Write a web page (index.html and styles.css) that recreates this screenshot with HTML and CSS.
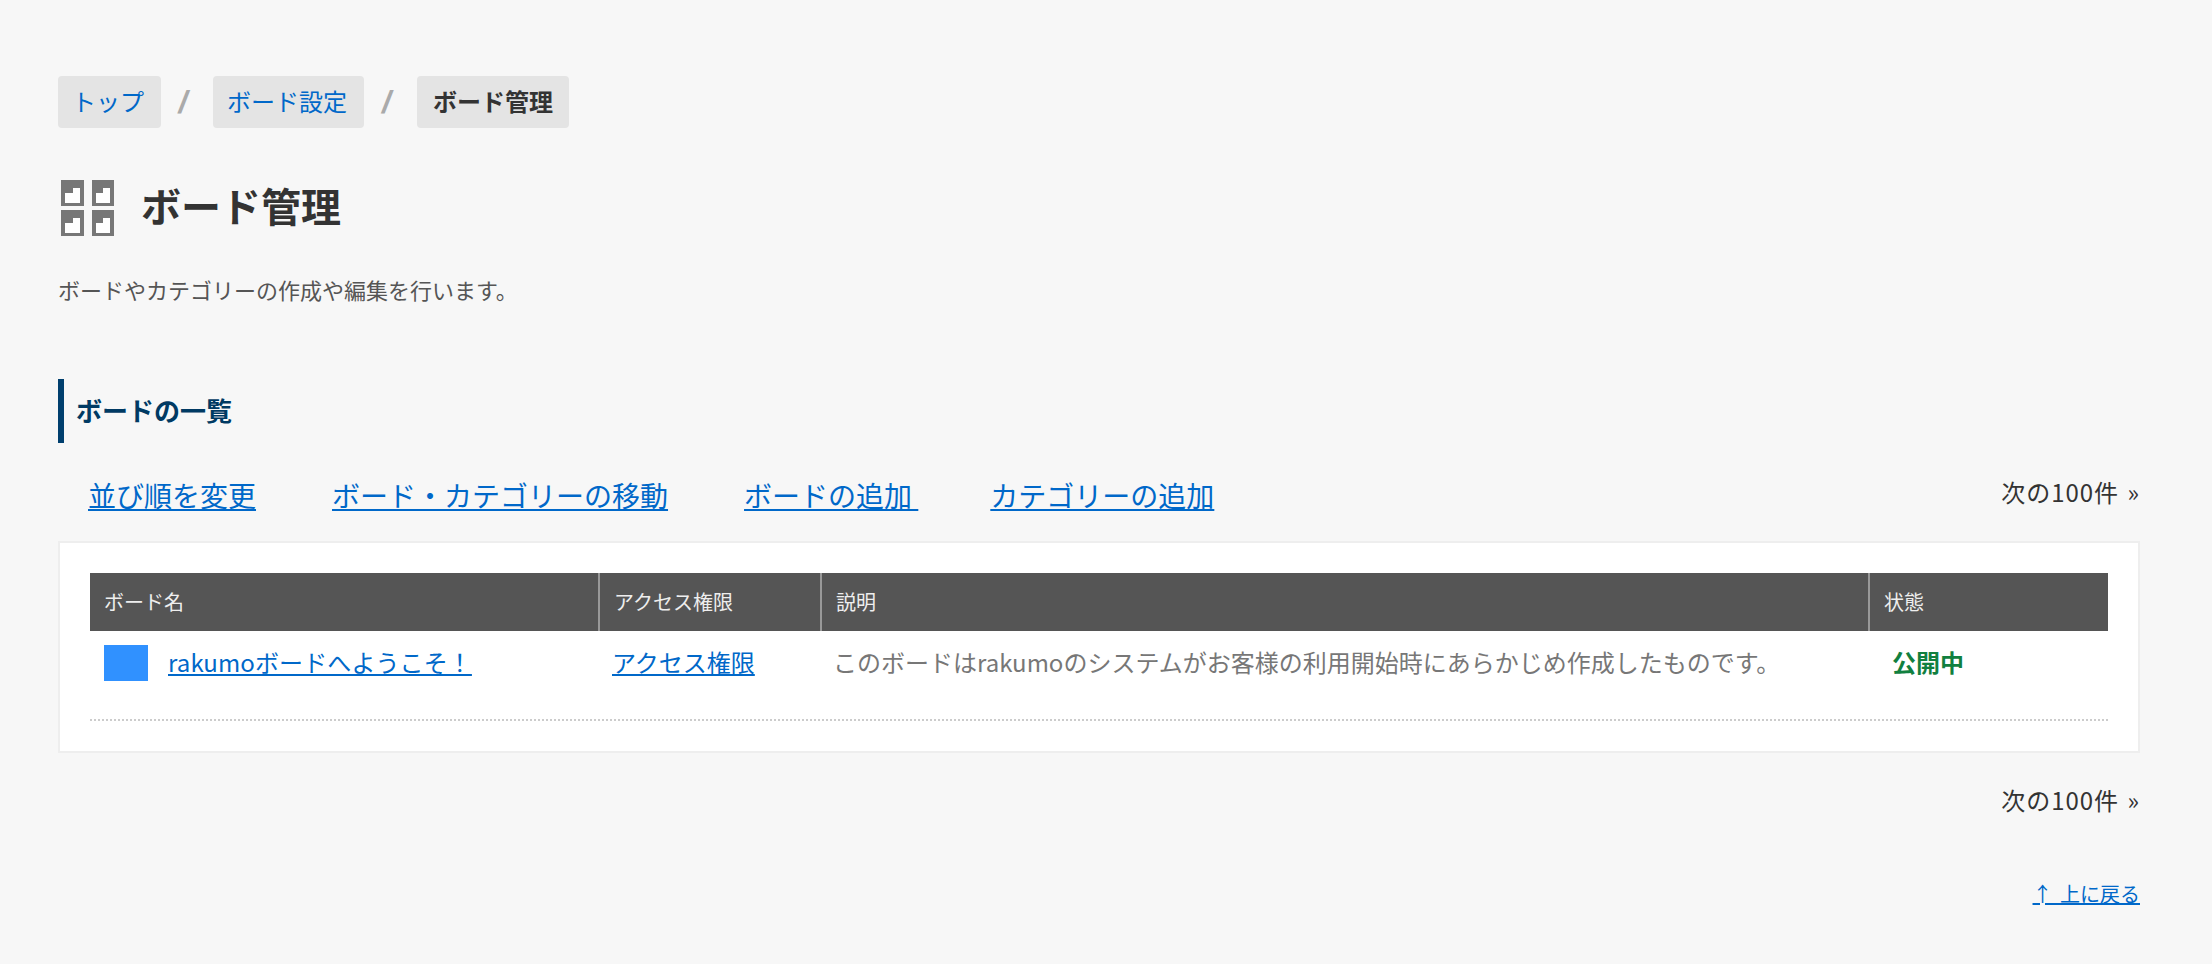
FILE: index.html
```html
<!DOCTYPE html>
<html lang="ja">
<head>
<meta charset="utf-8">
<title>ボード管理</title>
<link rel="stylesheet" href="styles.css">
</head>
<body>
<nav class="crumbs">
  <a class="crumb" href="#">トップ</a>
  <span class="sep">/</span>
  <a class="crumb" href="#">ボード設定</a>
  <span class="sep sep-wide">/</span>
  <span class="crumb current">ボード管理</span>
</nav>
<header class="title">
  <svg class="title-icon" width="53" height="56" viewBox="0 0 53 56" aria-hidden="true">
    <path fill="#777" d="M0 0h23v26H0z"/>
    <path fill="#fff" d="M4 13h8V8h7v15H4z"/>
    <path fill="#777" d="M31 0h22v26H31z"/>
    <path fill="#fff" d="M35 13h7V8h7v15H35z"/>
    <path fill="#777" d="M0 30h23v26H0z"/>
    <path fill="#fff" d="M4 43h8v-5h7v15H4z"/>
    <path fill="#777" d="M31 30h22v26H31z"/>
    <path fill="#fff" d="M35 43h7v-5h7v15H35z"/>
  </svg>
  <h1>ボード管理</h1>
</header>
<p class="lead">ボードやカテゴリーの作成や編集を行います。</p>
<h2 class="section">ボードの一覧</h2>
<div class="toolbar">
  <div class="actions">
    <a href="#">並び順を変更</a>
    <a href="#">ボード・カテゴリーの移動</a>
    <a class="tight" href="#">ボードの追加&nbsp;</a>
    <a href="#">カテゴリーの追加</a>
  </div>
  <span class="pager">次の100件 <b>»</b></span>
</div>
<section class="card">
  <div class="table">
    <div class="row head">
      <div class="cell">ボード名</div>
      <div class="cell">アクセス権限</div>
      <div class="cell">説明</div>
      <div class="cell">状態</div>
    </div>
    <div class="row body">
      <div class="cell name"><span class="swatch"></span><a href="#">rakumoボードへようこそ！</a></div>
      <div class="cell access"><a href="#">アクセス権限</a></div>
      <div class="cell desc">このボードはrakumoのシステムがお客様の利用開始時にあらかじめ作成したものです。</div>
      <div class="cell status">公開中</div>
    </div>
  </div>
</section>
<div class="pager-bottom"><span class="pager">次の100件 <b>»</b></span></div>
<div class="back"><a href="#">↑ 上に戻る</a></div>
</body>
</html>
```
FILE: styles.css
```css
* { box-sizing: border-box; }
html, body { margin: 0; }
body {
  background: #f7f7f7;
  color: #333;
  padding: 76px 72px 0 58px;
  height: 964px;
  overflow: hidden;
  font-family: "Noto Sans CJK JP", "Noto Sans", sans-serif;
}
a { color: #0068c9; }
.crumbs { display: flex; align-items: center; height: 52px; }
.crumb {
  display: flex; align-items: center; height: 52px; padding: 0 17px 3px 14px;
  background: #e4e4e4; border-radius: 4px; font-size: 24px; text-decoration: none;
}
.crumb.current { font-weight: 700; color: #333; padding: 0 16px 3px; }
.sep {
  width: 52px; padding-right: 8px; text-align: center;
  font-family: "Liberation Sans", sans-serif; font-size: 32px; font-weight: 700; font-style: italic; color: #aaa;
}
.sep-wide { width: 53px; }
.title { display: flex; align-items: center; margin-top: 52px; padding-left: 3px; height: 56px; }
.title-icon { flex: none; }
.title h1 { margin: 0 0 6px 27px; font-size: 40px; line-height: 50px; font-weight: 700; color: #333; }
.lead { margin: 37px 0 0; font-size: 22px; line-height: 32px; color: #555; }
.section {
  margin: 74px 0 0; height: 64px; border-left: 6px solid #003f6e; padding-left: 12px;
  font-size: 26px; line-height: 62px; font-weight: 700; color: #003a63;
}
.toolbar { display: flex; justify-content: space-between; align-items: flex-start; margin-top: 30px; height: 68px; }
.actions { display: flex; gap: 76px; padding-left: 30px; font-size: 28px; line-height: 44px; }
.tight { margin-right: -4px; }
.pager { font-size: 24px; line-height: 36px; color: #333; letter-spacing: 1px; word-spacing: 2px; }
.toolbar .pager { padding-top: 1px; }
.pager b { font-weight: 400; }
.card { height: 212px; background: #fff; border: 2px solid #eee; padding: 30px 30px 0; }
.table { border-bottom: 2px dotted #ccc; height: 148px; }
.row { display: grid; grid-template-columns: 508px 222px 1048px 1fr; }
.head { height: 58px; background: #555; color: #eee; font-size: 20px; }
.head .cell { display: flex; align-items: center; padding: 0 0 2px 14px; }
.head .cell + .cell { border-left: 2px solid #999; }
.body { font-size: 24px; line-height: 36px; padding-top: 14px; }
.body .cell { display: flex; align-items: center; height: 36px; padding: 0 0 3px 13px; }
.body .access { padding-left: 14px; }
.name { gap: 20px; padding-left: 14px !important; }
.name a { letter-spacing: 0.1px; }
.swatch { width: 44px; height: 36px; background: #3091ff; flex: none; margin-bottom: -3px; }
.desc { color: #777; }
.status { color: #11803f; font-weight: 700; padding-left: 24px !important; }
.pager-bottom { display: flex; justify-content: flex-end; margin-top: 29px; }
.back { display: flex; justify-content: flex-end; margin-top: 61px; font-size: 20px; line-height: 30px; word-spacing: 3px; }
```
